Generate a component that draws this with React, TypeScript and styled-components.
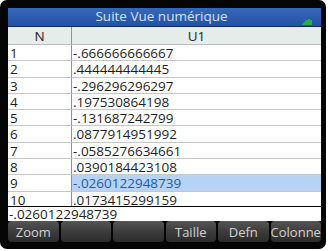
import { Fragment } from 'react';
import styled, { createGlobalStyle } from 'styled-components';

const GlobalStyle = createGlobalStyle`
  html, body {
    margin: 0;
    padding: 0;
    background: #ffffff;
  }
  body {
    font-family: "Open Sans", "Noto Sans", sans-serif;
  }
`;

const Frame = styled.div`
  box-sizing: border-box;
  width: 326px;
  height: 249px;
  background: #050505;
  border-radius: 7px;
  padding: 8px 5px 7px 8px;
`;

const Screen = styled.div`
  width: 313px;
  height: 234px;
  display: flex;
  flex-direction: column;
  background: #ffffff;
`;

const TitleBar = styled.div`
  box-sizing: border-box;
  height: 19px;
  flex-shrink: 0;
  display: flex;
  align-items: center;
  justify-content: center;
  position: relative;
  background: linear-gradient(#3767b8, #2453a6);
  border-bottom: 1px solid #142a55;
  color: #d4e2f6;
  font-size: 13.5px;
  padding-right: 6px;
  line-height: 1;
`;

const Battery = styled.svg`
  position: absolute;
  right: 9px;
  top: 11px;
`;

const Table = styled.div`
  display: grid;
  grid-template-columns: 64px 1fr;
  grid-template-rows: 18px;
  grid-auto-rows: 16.3px;
  height: 179px;
  flex-shrink: 0;
  overflow: hidden;
  font-size: 13.5px;
  color: #1e1e1e;
`;

const HeadCell = styled.div<{ $first?: boolean }>`
  box-sizing: border-box;
  background: #e5ecea;
  border-bottom: 1px solid #b9bfbe;
  border-right: ${(p) => (p.$first ? '1px solid #8f9493' : 'none')};
  text-align: center;
  line-height: 18px;
`;

const Cell = styled.div<{ $first?: boolean; $selected?: boolean }>`
  box-sizing: border-box;
  border-bottom: 1px solid #c4c8c7;
  border-right: ${(p) => (p.$first ? '1px solid #8f9493' : 'none')};
  background: ${(p) => (p.$selected ? '#b7d3f4' : '#ffffff')};
  color: ${(p) => (p.$selected ? '#2957a6' : '#1e1e1e')};
  padding-left: ${(p) => (p.$first ? '2px' : '1px')};
  padding-top: 1px;
  line-height: 15px;
  white-space: nowrap;
`;

const EditLine = styled.div`
  box-sizing: border-box;
  height: 15px;
  flex-shrink: 0;
  border-top: 1px solid #000000;
  padding-left: 1px;
  padding-top: 1px;
  font-size: 13.5px;
  line-height: 13px;
  color: #1e1e1e;
  background: #ffffff;
`;

const MenuBar = styled.div`
  display: flex;
  gap: 2px;
  height: 21px;
  flex-shrink: 0;
  background: #050505;
  margin-top: auto;
`;

const MenuButton = styled.div`
  flex: 1;
  display: flex;
  align-items: center;
  justify-content: center;
  border-radius: 4px;
  background: linear-gradient(#555555, #3a3a3a 55%, #2c2c2c);
  color: #d2d2d2;
  font-size: 13px;
  line-height: 1;
  padding-top: 1px;
`;

const values = [
  '-.666666666667',
  '.444444444445',
  '-.296296296297',
  '.197530864198',
  '-.131687242799',
  '.0877914951992',
  '-.0585276634661',
  '.0390184423108',
  '-.0260122948739',
  '.0173415299159',
];

const menu = ['Zoom', '', '', 'Taille', 'Defn', 'Colonne'];

const App = () => {
  const selected = 8;

  return (
    <>
      <GlobalStyle />
      <Frame>
        <Screen>
          <TitleBar>
            Suite Vue numérique
            <Battery width="11" height="6" viewBox="0 0 11 6">
              <polygon points="1,6 5,1 11,1 11,6" fill="#27b04a" />
              <rect x="7" y="0" width="2" height="1" fill="#27b04a" />
            </Battery>
          </TitleBar>
          <Table>
            <HeadCell $first>N</HeadCell>
            <HeadCell>U1</HeadCell>
            {values.map((v, i) => (
              <Fragment key={i}>
                <Cell $first>{i + 1}</Cell>
                <Cell $selected={i === selected}>{v}</Cell>
              </Fragment>
            ))}
          </Table>
          <EditLine>{values[selected]}</EditLine>
          <MenuBar>
            {menu.map((m, i) => (
              <MenuButton key={i}>{m}</MenuButton>
            ))}
          </MenuBar>
        </Screen>
      </Frame>
    </>
  );
};

export default App;
